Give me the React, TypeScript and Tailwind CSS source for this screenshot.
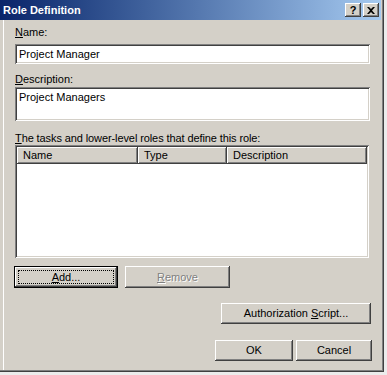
const raised =
  "shadow-[inset_-1px_-1px_#404040,inset_1px_1px_#ffffff,inset_-2px_-2px_#808080,inset_2px_2px_#d4d0c8]";
const sunken =
  "shadow-[inset_1px_1px_#808080,inset_-1px_-1px_#ffffff,inset_2px_2px_#404040,inset_-2px_-2px_#d4d0c8]";

const U = ({ children }: { children: string }) => <span className="underline underline-offset-1">{children}</span>;

const Button = ({
  children,
  className = "",
  disabled = false,
  def = false,
}: {
  children: React.ReactNode;
  className?: string;
  disabled?: boolean;
  def?: boolean;
}) => {
  if (def) {
    return (
      <div className={`border border-black bg-[#d4d0c8] ${className}`}>
        <div className={`relative w-full h-full flex items-center justify-center ${raised}`}>
          <div className="absolute inset-[3px] border border-dotted border-black" />
          <span>{children}</span>
        </div>
      </div>
    );
  }
  return (
    <div
      className={`bg-[#d4d0c8] flex items-center justify-center ${raised} ${
        disabled ? "text-[#808080] [text-shadow:1px_1px_#ffffff]" : ""
      } ${className}`}
    >
      {children}
    </div>
  );
};

const App = () => {
  return (
    <div className="w-[387px] h-[375px] bg-[#ececec] overflow-hidden font-['Liberation_Sans',Arial,sans-serif] text-[11px] leading-[13px] text-black">
      <div className="w-[384px] h-[372px] bg-[#d4d0c8] flex flex-col shadow-[inset_-1px_-1px_#404040,inset_-2px_-2px_#808080,inset_3px_0_#d4d0c8,inset_4px_0_#ffffff]">
        {/* title bar */}
        <div className="h-[20px] mr-[3px] flex items-center justify-between bg-gradient-to-r from-[#0a246a] to-[#a6caf0]">
          <span className="pl-[3px] font-bold text-white text-[11px]">Role Definition</span>
          <div className="flex gap-[2px] pr-[2px]">
            <div className={`w-[16px] h-[14px] bg-[#d4d0c8] flex items-center justify-center font-bold text-[11px] ${raised}`}>
              ?
            </div>
            <div className={`w-[16px] h-[14px] bg-[#d4d0c8] flex items-center justify-center ${raised}`}>
              <svg width="8" height="7" viewBox="0 0 8 7">
                <path d="M0 0h2l2 2 2-2h2L5 3.5 8 7H6L4 5 2 7H0l3-3.5z" fill="#000" />
              </svg>
            </div>
          </div>
        </div>

        <div className="flex flex-col pl-[15px]">
          <div className="mt-[6px] h-[13px]">
            <U>N</U>ame:
          </div>
          <div className={`mt-[5px] w-[355px] h-[20px] bg-white pl-[4px] flex items-center ${sunken}`}>
            Project Manager
          </div>

          <div className="mt-[9px] h-[13px]">
            <U>D</U>escription:
          </div>
          <div className={`mt-[1px] w-[355px] h-[34px] bg-white pl-[4px] pt-[4px] ${sunken}`}>
            Project Managers
          </div>

          <div className="mt-[11px] h-[13px] tracking-[-0.1px]">
            <U>T</U>he tasks and lower-level roles that define this role:
          </div>
          <div className={`w-[354px] h-[113px] bg-white p-[2px] ${sunken}`}>
            <div className="flex h-[17px]">
              <div className={`w-[121px] bg-[#d4d0c8] pl-[6px] flex items-center ${raised}`}>Name</div>
              <div className={`w-[89px] bg-[#d4d0c8] pl-[6px] flex items-center ${raised}`}>Type</div>
              <div className={`flex-1 bg-[#d4d0c8] pl-[6px] flex items-center ${raised}`}>Description</div>
            </div>
          </div>

          <div className="mt-[8px] flex -ml-[1px] gap-[7px]">
            <Button def className="w-[104px] h-[22px]">
              <U>A</U>dd...
            </Button>
            <Button disabled className="w-[105px] h-[22px]">
              <span>
                <U>R</U>emove
              </span>
            </Button>
          </div>

          <div className="mt-[15px] ml-[206px]">
            <Button className="w-[150px] h-[21px]">
              <span>
                Authorization <U>S</U>cript...
              </span>
            </Button>
          </div>

          <div className="mt-[16px] ml-[200px] flex gap-[3px]">
            <Button className="w-[78px] h-[21px]">OK</Button>
            <Button className="w-[76px] h-[21px]">Cancel</Button>
          </div>
        </div>
      </div>
    </div>
  );
};

export default App;
